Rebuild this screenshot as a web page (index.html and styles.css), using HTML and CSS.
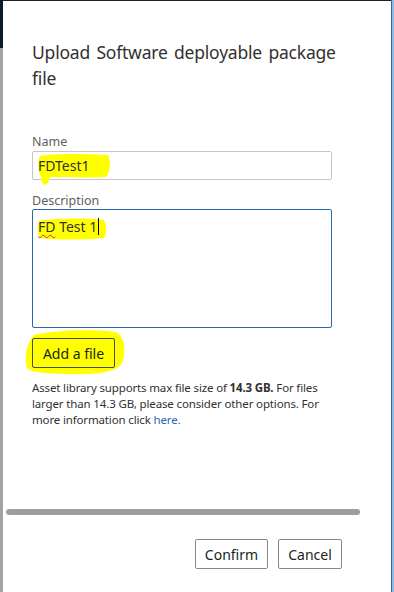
FILE: index.html
```html
<!DOCTYPE html>
<html>
<head>
<meta charset="utf-8">
<link rel="stylesheet" href="styles.css">
</head>
<body>
<div class="screen">
  <div class="left-strip">
    <div class="left-navy"></div>
    <div class="left-gray"></div>
  </div>
  <div class="dialog">
    <div class="content">
      <h1 class="title">Upload Software deployable package<br>file</h1>
      <div class="form">
        <label class="label">Name</label>
        <div class="field input">
          <svg class="mark mark-name" width="76" height="34" viewBox="0 0 76 34"><path d="M4 3 C20 0 50 1 72 2 C75 8 75 18 70 24 C50 25 25 24 14 24 C13 28 12 31 9 32 C6 31 5 27 5 24 C2 18 1 9 4 3 Z" fill="#ffff00"/></svg>
          <span class="value">FDTest1</span>
        </div>
        <label class="label desc-label">Description</label>
        <div class="field textarea">
          <svg class="mark mark-desc" width="72" height="22" viewBox="0 0 72 22"><path d="M3 3 C20 0 50 0 68 2 C71 8 71 15 68 20 C50 22 20 22 4 20 C1 14 1 8 3 3 Z" fill="#ffff00"/></svg>
          <span class="value"><span class="squiggle">FD</span> Test 1<span class="caret"></span></span>
        </div>
        <div class="add-wrap">
          <svg class="mark mark-btn" width="104" height="48" viewBox="0 0 104 48"><path d="M10 6 C30 1 70 0 92 3 C101 8 102 20 99 32 C96 41 80 46 50 45 C28 45 10 44 4 40 C0 34 1 16 10 6 Z" fill="#ffff00"/></svg>
          <button class="btn add-btn">Add a file</button>
        </div>
        <p class="note"><span class="line">Asset library supports max file size of <b>14.3 GB.</b> For files</span><span class="line">larger than 14.3 GB, please consider other options. For</span><span class="line">more information click <a class="link">here.</a></span></p>
      </div>
    </div>
    <div class="scrollbar"></div>
    <div class="footer">
      <button class="btn confirm">Confirm</button>
      <button class="btn cancel">Cancel</button>
    </div>
  </div>
  <div class="right-edge"></div>
</div>
</body>
</html>
```
FILE: styles.css
```css
html, body {
  margin: 0;
  padding: 0;
  background: #ffffff;
}
.screen {
  width: 394px;
  height: 592px;
  display: flex;
  overflow: hidden;
  font-family: "Noto Sans", "Open Sans", sans-serif;
  color: #323130;
}
.left-strip {
  width: 3px;
  display: flex;
  flex-direction: column;
}
.left-navy {
  height: 48px;
  background: #0f1a2c;
}
.left-gray {
  flex: 1;
  background: #a3a3a3;
}
.dialog {
  flex: 1;
  display: flex;
  flex-direction: column;
  border-top: 1px solid #1e1e1e;
  background: #ffffff;
}
.right-edge {
  width: 3px;
  border-left: 1px solid #3e6890;
  background: #8dbbe6;
  box-sizing: border-box;
}
.content {
  padding: 0 20px 0 29px;
}
.title {
  margin: 38px 0 0 0;
  font-size: 17.5px;
  letter-spacing: -0.2px;
  word-spacing: 2px;
  font-weight: 400;
  line-height: 26px;
  white-space: nowrap;
  color: #323130;
}
.form {
  margin-top: 43px;
  display: flex;
  flex-direction: column;
}
.label {
  font-size: 12.5px;
  line-height: 16px;
  color: #605e5c;
}
.desc-label {
  margin-top: 13px;
}
.field {
  position: relative;
  width: 300px;
  margin-top: 1px;
  border: 1px solid #c8c6c4;
  border-radius: 2px;
  height: 29px;
  box-sizing: border-box;
  font-size: 14px;
  color: #323130;
}
.field .value {
  position: relative;
  display: block;
  padding: 4px 5px;
  line-height: 20px;
}
.textarea {
  margin-top: 0;
  height: 119px;
  border-color: #2b68b0;
}
.textarea .value {
  padding-top: 7px;
}
.mark {
  position: absolute;
}
.mark-name {
  left: 3px;
  top: 1px;
}
.mark-desc {
  left: 3px;
  top: 8px;
}
.squiggle {
  text-decoration: underline wavy #d13438;
  text-decoration-thickness: 1px;
  text-underline-offset: 2px;
}
.caret {
  display: inline-block;
  width: 1px;
  height: 17px;
  background: #000;
  vertical-align: -3px;
  margin-left: 1px;
}
.add-wrap {
  position: relative;
  margin-top: 10px;
  height: 30px;
}
.mark-btn {
  left: -8px;
  top: -9px;
}
.btn {
  font-family: inherit;
  font-size: 14px;
  color: #201f1e;
  background: #ffffff;
  border: 1px solid #8a8886;
  border-radius: 2px;
  padding: 0;
  height: 30px;
  position: relative;
}
.add-btn {
  background: #ffff00;
  border-color: #4a4a3a;
  width: 83px;
}
.confirm {
  width: 73px;
}
.cancel {
  width: 64px;
}
.note {
  margin: 12px 0 0 0;
  font-size: 11.5px;
  letter-spacing: -0.15px;
  line-height: 16px;
  color: #323130;
  display: flex;
  flex-direction: column;
}
.note .line {
  white-space: nowrap;
}
.note b {
  font-weight: 700;
}
.link {
  color: #2b66b5;
}
.scrollbar {
  margin: auto 31px 0 3px;
  height: 6px;
  border-radius: 3px;
  background: #9e9e9e;
}
.footer {
  display: flex;
  justify-content: flex-end;
  gap: 10px;
  padding: 24px 49px 23px 0;
}
```
